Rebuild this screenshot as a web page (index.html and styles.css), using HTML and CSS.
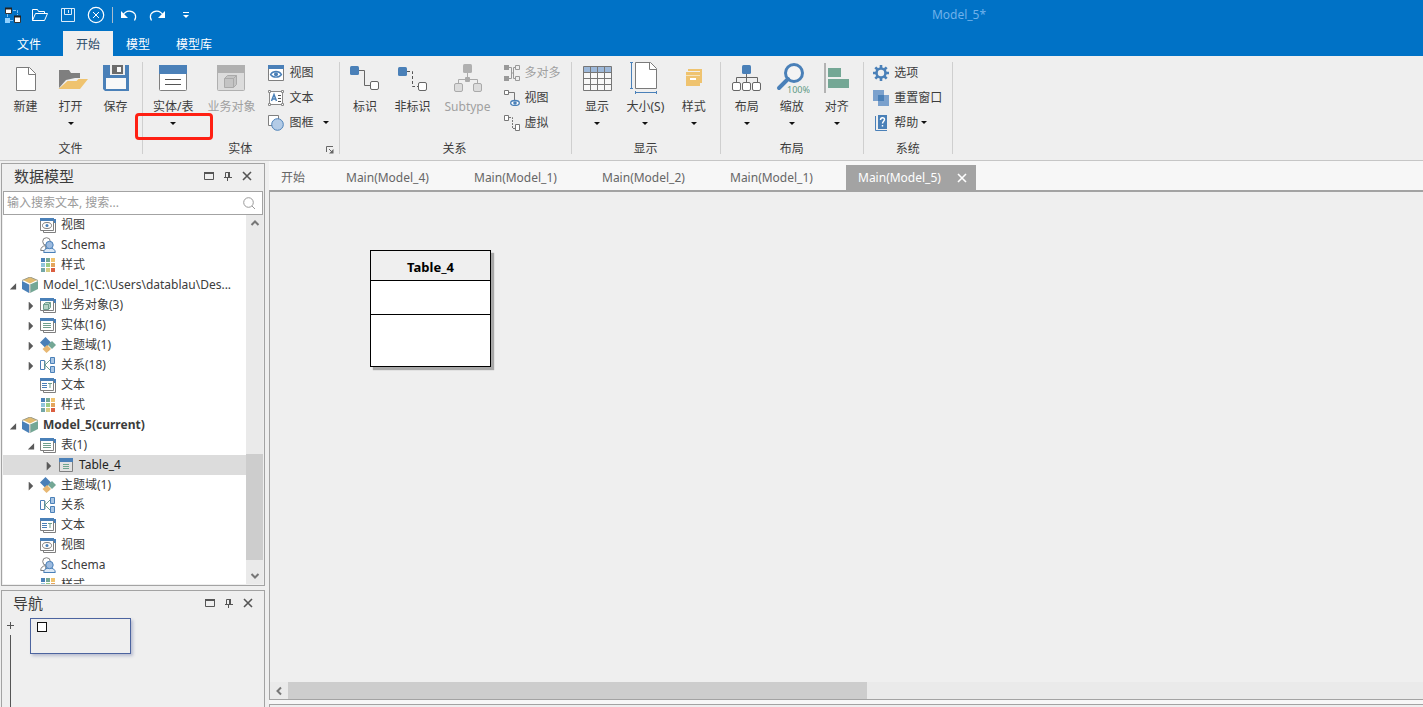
FILE: index.html
```html
<!DOCTYPE html>
<html lang="zh-CN">

<head>
    <meta charset="UTF-8">
    <meta name="viewport" content="width=device-width, initial-scale=1.0">
    <title>Model_5*</title>
    <link rel="stylesheet" href="styles.css">
</head>

<body>
    <!-- shared icons -->
    <svg class="defs" width="0" height="0">
        <symbol id="i-stack" viewBox="0 0 16 16">
            <path d="M13 4.500h2.500v11h-12v-2" fill="none" stroke="#7f7f7f" />
            <path d="M13 2h3v4h-2z" fill="#4a80b8" />
            <path d="M.5 1.500h13v12h-13z" fill="#fff" stroke="#7f7f7f" />
            <path d="M0 1h14v3H0z" fill="#4a80b8" />
        </symbol>
        <symbol id="i-views" viewBox="0 0 16 16">
            <use href="#i-stack" />
            <ellipse cx="7" cy="8.500" rx="4.500" ry="3" fill="none" stroke="#7f7f7f" />
            <circle cx="7" cy="8.500" r="1.500" fill="#4a80b8" />
        </symbol>
        <symbol id="i-objects" viewBox="0 0 16 16">
            <use href="#i-stack" />
            <path d="M3.500 7.500h5v5h-5zM3.500 7.500l2-2h5v5l-2 2M8.500 7.500l2-2" fill="#b5d3c6" stroke="#6f9f8e" />
        </symbol>
        <symbol id="i-entities" viewBox="0 0 16 16">
            <use href="#i-stack" />
            <path d="M3 6.500h8M3 8.500h8M3 10.500h8" stroke="#6f9f8e" />
        </symbol>
        <symbol id="i-texts" viewBox="0 0 16 16">
            <use href="#i-stack" />
            <path d="M2 6.500h5M2 8.500h5M2 10.500h5" stroke="#4a80b8" />
            <path d="M8 6.500h4M10 6v5" stroke="#6f9f8e" />
        </symbol>
        <symbol id="i-table" viewBox="0 0 16 16">
            <path d="M1.500 1.500h13v13h-13z" fill="#e2e2e2" stroke="#7f7f7f" />
            <path d="M1 1h14v4H1z" fill="#4a80b8" />
            <path d="M5 7.500h6M5 9.500h6M5 11.500h6" stroke="#6fa58e" />
        </symbol>
        <symbol id="i-schema" viewBox="0 0 16 16">
            <circle cx="6.500" cy="4.500" r="3.800" fill="#fff" stroke="#7f7f7f" />
            <path d="M.7 13.500c0-3 2-4.500 5-5v5z" fill="#fff" stroke="#7f7f7f" />
            <path d="M3.700 15.500c0-3 2.300-4.500 5.800-4.500s5.800 1.500 5.800 4.500z" fill="#dce8f5" stroke="#4a80b8" />
            <circle cx="9.500" cy="8" r="3.700" fill="#9dbbdf" stroke="#4a80b8" />
        </symbol>
        <symbol id="i-styles" viewBox="0 0 16 16">
            <path d="M1 1h4v4H1z" fill="#4a80b8" />
            <path d="M6 1h4v4H6z" fill="#74a795" />
            <path d="M11 1h4v4h-4z" fill="#f0c46f" />
            <path d="M1 6h4v4H1z" fill="#92c6dc" />
            <path d="M6 6h4v4H6z" fill="#98cc86" />
            <path d="M11 6h4v4h-4z" fill="#e3a45c" />
            <path d="M1 11h4v4H1z" fill="#74a7a7" />
            <path d="M6 11h4v4H6z" fill="#d6cd83" />
            <path d="M11 11h4v4h-4z" fill="#db5f40" />
        </symbol>
        <symbol id="i-model" viewBox="0 0 16 16">
            <path d="M8 0l7 3-7 3.500L1 3z" fill="#e2bc70" />
            <path d="M0 4l7 3.500V16l-7-4z" fill="#4a80b8" />
            <path d="M16 4L8 7.500V16l8-4z" fill="#74a795" />
            <path d="M7 7.500h1.500V16H7z" fill="#c9c9c9" />
            <path d="M0 3.500L8 0l8 3.500" fill="none" stroke="#9d9d8a" />
        </symbol>
        <symbol id="i-subject" viewBox="0 0 16 16">
            <path d="M5.500 0L11 5.500 5.500 11 0 5.500z" fill="#4a80b8" />
            <path d="M12 4l4 4-4 4-4-4z" fill="#74a795" />
            <path d="M7 8l4 4-4.500 4-4-4z" fill="#e8b873" />
        </symbol>
        <symbol id="i-relation" viewBox="0 0 16 16">
            <path d="M.5 3.500h4v9h-4z" fill="#fff" stroke="#4a80b8" />
            <path d="M10 3L5 8l5 5M5 4v8" fill="none" stroke="#6f9f8e" />
            <path d="M10.500.5h4v6h-4zM10.500 9.500h4v6h-4z" fill="#a9c6e4" stroke="#4a80b8" />
        </symbol>
        <symbol id="i-window" viewBox="0 0 12 12">
            <path d="M1.500 3h9v6.500h-9z" fill="none" stroke="#555" />
            <path d="M1 2h10v2H1z" fill="#555" />
        </symbol>
        <symbol id="i-pin" viewBox="0 0 12 12">
            <path d="M3.500 7V2.500h4V7M2 7.500h8M5.500 8v3" fill="none" stroke="#555" />
            <path d="M6 2h2v6H6z" fill="#555" />
        </symbol>
        <symbol id="i-close" viewBox="0 0 12 12">
            <path d="M2 2l8 8M10 2l-8 8" stroke="currentColor" stroke-width="1.600" />
        </symbol>
    </svg>

    <header class="titlebar">
        <div class="quick">
            <button aria-label="Model"><svg viewBox="0 0 18 18">
                <path d="M1.500 2.500h6v5h-6z" fill="#fff" stroke="#333" />
                <path d="M10.500 10.500h6v6h-6z" fill="#fff" stroke="#333" />
                <path d="M1 1.500h7v2H1zM10 9.500h7v2h-7z" fill="#222" />
                <path d="M1 12h5v5H1z" fill="#8fd0ff" />
                <path d="M3.500 8v4M9 4.500h4.500V9M6 14.500h4" fill="none" stroke="#7fc0f5" stroke-dasharray="3 1" />
            </svg></button>
            <button aria-label="打开"><svg viewBox="0 0 18 18">
                <path d="M1.500 14.500v-11h5l1 2h6v2M1.500 14.500l3-7h12l-3 7z" fill="none" stroke="#fff" />
            </svg></button>
            <button aria-label="保存"><svg viewBox="0 0 18 18">
                <path d="M2.500 2.500h13v13h-13zM5.500 2.500v6h7v-6M9.500 4v3" fill="none" stroke="#dcecfa" />
            </svg></button>
            <button aria-label="关闭"><svg viewBox="0 0 18 18">
                <path d="M6 6l6 6M12 6l-6 6" stroke="#fff" />
                <circle cx="9" cy="9" r="7.700" fill="none" stroke="#fff" stroke-width="1.200" />
            </svg></button>
            <span class="quick-sep"></span>
            <button aria-label="撤销"><svg viewBox="0 0 18 18">
                <path d="M3 9c3-5 9-5 12-1 1 2 1 4-.500 6.500" fill="none" stroke="#fff" stroke-width="1.200" />
                <path d="M1 5v7h7z" fill="#fff" />
            </svg></button>
            <button aria-label="重做"><svg viewBox="0 0 18 18">
                <path d="M15 9c-3-5-9-5-12-1-1 2-1 4 .5 6.500" fill="none" stroke="#fff" stroke-width="1.200" />
                <path d="M17 5v7h-7z" fill="#fff" />
            </svg></button>
            <button aria-label="更多"><svg viewBox="0 0 18 18">
                <path d="M7 6.500h6" stroke="#fff" />
                <path d="M7 9h6l-3 3z" fill="#fff" />
            </svg></button>
        </div>
        <div class="title">Model_5*</div>
    </header>

    <nav class="menu">
        <button>文件</button>
        <button class="active">开始</button>
        <button>模型</button>
        <button>模型库</button>
    </nav>

    <div class="ribbon">
        <section class="group">
            <div class="tools">
                <button class="tool"><svg viewBox="0 0 36 36">
                    <path d="M8.500 6.500h13l6 6v17h-19z" fill="#fff" stroke="#7a7a7a" />
                    <path d="M20.500 6.500v7h7" fill="none" stroke="#7a7a7a" />
                </svg><span>新建</span></button>
                <button class="tool drop"><svg viewBox="0 0 36 36">
                    <path d="M6 9h10l2 3h9v5h-5l-9 2-7 8z" fill="#7f7f7f" />
                    <path d="M5.500 28l9-8h9l2-2H35l-8 10z" fill="#efc36f" />
                </svg><span>打开</span></button>
                <button class="tool"><svg viewBox="0 0 36 36">
                    <path d="M5 4h26v26H7l-2-2z" fill="#4a80b8" />
                    <path d="M12 4h15v10H12z" fill="#efefef" />
                    <path d="M14 4h11v9H14z" fill="#6b6b6b" />
                    <path d="M19 6h4v5h-4zM8 17h20v11H8z" fill="#f8f8f8" />
                </svg><span>保存</span></button>
            </div>
            <div class="group-name">文件</div>
        </section>

        <section class="group">
            <div class="tools">
                <button class="tool drop"><svg viewBox="0 0 36 36">
                    <rect x="4.500" y="4.500" width="27" height="25" rx="1" fill="#fff" stroke="#7f7f7f" />
                    <path d="M4 4h28v9H4z" fill="#4a80b8" />
                    <path d="M10 18.500h16M10 23.500h16" stroke="#555" />
                </svg><span>实体/表</span></button>
                <button class="tool" disabled><svg viewBox="0 0 36 36">
                    <rect x="4.500" y="4.500" width="27" height="25" rx="1" fill="#dcdcdc" stroke="#b0b0b0" />
                    <path d="M4 4h28v8H4z" fill="#b0b0b0" />
                    <path d="M11.500 17.500h9v9h-9zM11.500 17.500l3-3h9v9l-3 3M20.500 17.500l3-3" fill="#c4c4c4" stroke="#aaa" />
                </svg><span>业务对象</span></button>
                <div class="small-tools">
                    <button class="small"><svg viewBox="0 0 16 16">
                        <path d="M.5.500h15v15H.5z" fill="#fff" stroke="#7f7f7f" />
                        <path d="M0 0h16v4H0z" fill="#4a80b8" />
                        <path d="M2.500 9.500C5 5.500 11 5.500 13.500 9.500 11 13 5 13 2.500 9.500z" fill="#fff" stroke="#4a80b8" stroke-width="1.300" />
                        <circle cx="8" cy="9.300" r="2" fill="#4a80b8" />
                    </svg>视图</button>
                    <button class="small"><svg viewBox="0 0 16 16">
                        <path d="M1.500 1.500h13v13h-13z" fill="#fff" stroke="#8a8a8a" />
                        <path d="M.5.500h2v2h-2zM13.500.500h2v2h-2zM.5 13.500h2v2h-2zM13.500 13.500h2v2h-2z" fill="#fff" stroke="#8a8a8a" />
                        <path d="M3.500 11L6 4.500 8.500 11M4.500 9h3" fill="none" stroke="#4a80b8" stroke-width="1.500" />
                        <path d="M10 5.500h3M10 8.500h3M10 11.500h3" stroke="#555" />
                    </svg>文本</button>
                    <button class="small small-drop"><svg viewBox="0 0 16 16">
                        <path d="M.5.500h10v10H.5z" fill="#fff" stroke="#7f7f7f" />
                        <circle cx="9.500" cy="9.500" r="5.800" fill="#b3cbe6" stroke="#4a80b8" />
                    </svg>图框</button>
                </div>
            </div>
            <div class="group-name">实体</div>
            <button class="launcher" aria-label="实体设置"><svg viewBox="0 0 8 8">
                <path d="M.5 6V.500H7M3 3l3 3" fill="none" stroke="#666" />
                <path d="M7.500 3v4.500H3z" fill="#666" />
            </svg></button>
            <div class="highlight"></div>
        </section>

        <section class="group">
            <div class="tools">
                <button class="tool"><svg viewBox="0 0 36 36">
                    <rect x="3" y="5" width="9" height="9" rx="1.500" fill="#4a80b8" />
                    <path d="M12 9.500h5.500v15H23" fill="none" stroke="#666" />
                    <rect x="23.500" y="20.500" width="8" height="8" rx="1.500" fill="#fff" stroke="#666" />
                </svg><span>标识</span></button>
                <button class="tool"><svg viewBox="0 0 36 36">
                    <rect x="3" y="6" width="9" height="9" rx="1.500" fill="#4a80b8" />
                    <path d="M12 10.500h5.500v15H23" fill="none" stroke="#555" stroke-dasharray="3 2" />
                    <rect x="23.500" y="21.500" width="8" height="8" rx="1.500" fill="#fff" stroke="#666" />
                </svg><span>非标识</span></button>
                <button class="tool" disabled><svg viewBox="0 0 36 36">
                    <rect x="13" y="3" width="9" height="9" rx="1.500" fill="#b0b0b0" />
                    <path d="M17.500 12v6.500M8.500 22v-3.500h19V22" fill="none" stroke="#aaa" />
                    <rect x="15" y="16" width="5" height="5" rx="1" fill="#aaa" />
                    <rect x="4.500" y="22.500" width="8" height="8" rx="1.500" fill="#dcdcdc" stroke="#aaa" />
                    <rect x="23.500" y="22.500" width="8" height="8" rx="1.500" fill="#dcdcdc" stroke="#aaa" />
                </svg><span>Subtype</span></button>
                <div class="small-tools">
                    <button class="small" disabled><svg viewBox="0 0 16 16">
                        <path d="M5 2.500h2.500v11H5M12 2.500H9.500v11H12M7 8h3" fill="none" stroke="#999" />
                        <path d="M0 0h5v5H0zM0 11h5v5H0z" fill="#999" />
                        <path d="M11.500.500h4v4h-4zM11.500 11.500h4v4h-4z" fill="#eee" stroke="#999" />
                    </svg>多对多</button>
                    <button class="small"><svg viewBox="0 0 16 16">
                        <path d="M.5.500h4v4h-4z" fill="#fff" stroke="#777" />
                        <path d="M5 2.500h5.500V10" fill="none" stroke="#777" />
                        <ellipse cx="11" cy="13" rx="4.300" ry="2.500" fill="#fff" stroke="#4a80b8" stroke-width="1.300" />
                        <circle cx="11" cy="13" r="1.800" fill="#4a80b8" />
                    </svg>视图</button>
                    <button class="small"><svg viewBox="0 0 16 16">
                        <path d="M.5.500h4v5h-4zM11.500 9.500h4v6h-4z" fill="#fff" stroke="#777" />
                        <path d="M5 2.500h3.500V13.500H11" fill="none" stroke="#777" stroke-dasharray="2 1" />
                    </svg>虚拟</button>
                </div>
            </div>
            <div class="group-name">关系</div>
        </section>

        <section class="group">
            <div class="tools">
                <button class="tool drop"><svg viewBox="0 0 36 36">
                    <path d="M4.500 5.500h28v24h-28z" fill="#f8f8f8" />
                    <path d="M4.500 5.500h28v6h-28z" fill="#9db8d9" />
                    <path d="M4.500 5.500h28v24h-28zM4.500 11.500h28M4.500 17.500h28M4.500 23.500h28M11.500 5.500v24M18.500 5.500v24M25.500 5.500v24" fill="none" stroke="#777" />
                </svg><span>显示</span></button>
                <button class="tool drop"><svg viewBox="0 0 36 36">
                    <path d="M8.500 1.500h15l6 6v20h-21z" fill="#fff" stroke="#7a7a7a" />
                    <path d="M22.500 1.500v7h7" fill="none" stroke="#7a7a7a" />
                    <path d="M4.500 1.500v26M3 1.500h3M3 27.500h3M8.500 31.500h21M8.500 30v3M29.500 30v3" stroke="#4a80b8" />
                </svg><span>大小(S)</span></button>
                <button class="tool drop"><svg viewBox="0 0 36 36">
                    <path d="M12 8h14v14h-2V10H12zM10 11h14v3H10zM10 15h14v10H10z" fill="#efc36f" />
                    <path d="M10 14.500h14" stroke="#f6e3bb" />
                    <path d="M14 17h6v2h-6z" fill="#fff" />
                </svg><span>样式</span></button>
            </div>
            <div class="group-name">显示</div>
        </section>

        <section class="group">
            <div class="tools">
                <button class="tool drop"><svg viewBox="0 0 36 36">
                    <rect x="13" y="4" width="9" height="9" rx="1.500" fill="#4a80b8" />
                    <path d="M17.500 13v8M7.500 21v-4.500h21V21" fill="none" stroke="#666" />
                    <rect x="3.500" y="21.500" width="8" height="8" rx="1.500" fill="#fff" stroke="#666" />
                    <rect x="13.500" y="21.500" width="8" height="8" rx="1.500" fill="#fff" stroke="#666" />
                    <rect x="23.500" y="21.500" width="8" height="8" rx="1.500" fill="#fff" stroke="#666" />
                </svg><span>布局</span></button>
                <button class="tool drop"><svg viewBox="0 0 36 36">
                    <circle cx="20" cy="12" r="8.500" fill="#f4f4f4" stroke="#4a80b8" stroke-width="3" />
                    <path d="M14 18l-9 9" stroke="#4a80b8" stroke-width="4" stroke-linecap="round" />
                    <text x="13" y="32" class="zoom-text">100%</text>
                </svg><span>缩放</span></button>
                <button class="tool drop"><svg viewBox="0 0 36 36">
                    <path d="M6 2v30" stroke="#777" />
                    <path d="M9 7h13v9H9zM9 18h21v9H9z" fill="#74a795" />
                </svg><span>对齐</span></button>
            </div>
            <div class="group-name">布局</div>
        </section>

        <section class="group">
            <div class="tools">
                <div class="small-tools">
                    <button class="small"><svg viewBox="0 0 16 16">
                        <circle cx="8" cy="8" r="4.500" fill="none" stroke="#4a80b8" stroke-width="2.600" />
                        <path d="M8 0v3M8 13v3M0 8h3M13 8h3M2.300 2.300l2.200 2.200M11.500 11.500l2.200 2.200M13.700 2.300l-2.200 2.200M4.500 11.500l-2.200 2.200" stroke="#4a80b8" stroke-width="2.600" />
                    </svg>选项</button>
                    <button class="small"><svg viewBox="0 0 16 16">
                        <path d="M0 0h11v11H0zM5 5h11v11H5z" fill="#7ba1cd" />
                        <path d="M5 5h6v6H5z" fill="#4a80b8" />
                    </svg>重置窗口</button>
                    <button class="small small-drop near"><svg viewBox="0 0 16 16">
                        <path d="M2.500 1v14.500H14" fill="none" stroke="#4a80b8" />
                        <path d="M5 0h9v14H5z" fill="#4a80b8" />
                        <path d="M7.500 5c0-3 4-3 4-.5 0 1.500-2 2-2 4M9.500 10v1.500" fill="none" stroke="#fff" stroke-width="1.400" />
                    </svg>帮助</button>
                </div>
            </div>
            <div class="group-name">系统</div>
        </section>
    </div>

    <div class="workspace">
        <aside class="sidebar">
            <section class="panel model-panel">
                <div class="panel-head">
                    <h2>数据模型</h2>
                    <button aria-label="窗口"><svg><use href="#i-window" /></svg></button>
                    <button aria-label="固定"><svg><use href="#i-pin" /></svg></button>
                    <button aria-label="关闭"><svg><use href="#i-close" /></svg></button>
                </div>
                <div class="search">
                    <input type="text" aria-label="搜索" placeholder="输入搜索文本, 搜索...">
                    <svg viewBox="0 0 12 12">
                        <circle cx="5.500" cy="5.500" r="4.800" fill="none" stroke="#999" />
                        <path d="M9 9l3 3" stroke="#999" />
                    </svg>
                </div>
                <div class="tree-wrap">
                    <ul class="tree">
                        <li class="row l1"><svg><use href="#i-views" /></svg>视图</li>
                        <li class="row l1"><svg><use href="#i-schema" /></svg>Schema</li>
                        <li class="row l1"><svg><use href="#i-styles" /></svg>样式</li>
                        <li class="row open"><svg><use href="#i-model" /></svg>Model_1(C:\Users\datablau\Des...</li>
                        <li class="row l1 closed"><svg><use href="#i-objects" /></svg>业务对象(3)</li>
                        <li class="row l1 closed"><svg><use href="#i-entities" /></svg>实体(16)</li>
                        <li class="row l1 closed"><svg><use href="#i-subject" /></svg>主题域(1)</li>
                        <li class="row l1 closed"><svg><use href="#i-relation" /></svg>关系(18)</li>
                        <li class="row l1"><svg><use href="#i-texts" /></svg>文本</li>
                        <li class="row l1"><svg><use href="#i-styles" /></svg>样式</li>
                        <li class="row open current"><svg><use href="#i-model" /></svg>Model_5(current)</li>
                        <li class="row l1 open"><svg><use href="#i-entities" /></svg>表(1)</li>
                        <li class="row l2 closed selected"><svg><use href="#i-table" /></svg>Table_4</li>
                        <li class="row l1 closed"><svg><use href="#i-subject" /></svg>主题域(1)</li>
                        <li class="row l1"><svg><use href="#i-relation" /></svg>关系</li>
                        <li class="row l1"><svg><use href="#i-texts" /></svg>文本</li>
                        <li class="row l1"><svg><use href="#i-views" /></svg>视图</li>
                        <li class="row l1"><svg><use href="#i-schema" /></svg>Schema</li>
                        <li class="row l1"><svg><use href="#i-styles" /></svg>样式</li>
                    </ul>
                    <div class="vscroll">
                        <svg viewBox="0 0 10 10"><path d="M1.500 7L5 3.500 8.500 7" fill="none" stroke="#777" stroke-width="2" /></svg>
                        <div class="vtrack"><div class="vthumb"></div></div>
                        <svg viewBox="0 0 10 10"><path d="M1.500 3L5 6.500 8.500 3" fill="none" stroke="#777" stroke-width="2" /></svg>
                    </div>
                </div>
            </section>

            <section class="panel nav-panel">
                <div class="panel-head">
                    <h2>导航</h2>
                    <button aria-label="窗口"><svg><use href="#i-window" /></svg></button>
                    <button aria-label="固定"><svg><use href="#i-pin" /></svg></button>
                    <button aria-label="关闭"><svg><use href="#i-close" /></svg></button>
                </div>
                <div class="nav-body">
                    <div class="zoombar">
                        <svg viewBox="0 0 7 7"><path d="M0 3.500h7M3.500 0v7" stroke="#555" /></svg>
                        <div class="zoomline"></div>
                    </div>
                    <div class="minimap"><div class="mini-table"></div></div>
                </div>
            </section>
        </aside>

        <main class="editor">
            <div class="tabs">
                <button class="tab home">开始</button>
                <button class="tab">Main(Model_4)</button>
                <button class="tab">Main(Model_1)</button>
                <button class="tab">Main(Model_2)</button>
                <button class="tab">Main(Model_1)</button>
                <button class="tab active">Main(Model_5)<svg><use href="#i-close" /></svg></button>
            </div>
            <div class="canvas">
                <div class="entity">
                    <div class="entity-name">Table_4</div>
                    <div class="entity-keys"></div>
                    <div class="entity-columns"></div>
                </div>
            </div>
            <div class="hscroll">
                <svg viewBox="0 0 10 10"><path d="M7 1.500L3.500 5 7 8.500" fill="none" stroke="#777" stroke-width="2" /></svg>
                <div class="htrack"><div class="hthumb"></div></div>
            </div>
            <div class="bottom-dock"></div>
        </main>
    </div>
</body>

</html>
```

FILE: styles.css
```css
* {
    margin: 0;
    padding: 0;
    box-sizing: border-box;
}

body {
    display: flex;
    flex-direction: column;
    height: 100vh;
    overflow: hidden;
    background: #efefef;
    color: #3c3c3c;
    font: 12px/20px "Noto Sans", "Noto Sans CJK SC", sans-serif;
}

button,
input {
    font: inherit;
    color: inherit;
    background: none;
    border: none;
}

svg {
    flex: none;
    display: block;
}

.defs {
    position: absolute;
}

/* title bar */
.titlebar {
    display: flex;
    align-items: center;
    height: 30px;
    background: #0072c6;
}

.quick {
    display: flex;
    align-items: center;
}

.quick button {
    width: 28px;
    display: flex;
    justify-content: center;
}

.quick button:first-child {
    width: 26px;
}

.quick svg {
    width: 18px;
    height: 18px;
}

.quick-sep {
    width: 1px;
    height: 16px;
    margin: 0 2px;
    background: #a9bccd;
}

.title {
    flex: 1;
    padding-left: 296px;
    text-align: center;
    color: #6fb1ea;
}

.menu {
    display: flex;
    height: 26px;
    padding: 1px 0 0 4px;
    background: #0072c6;
    color: #fff;
}

.menu button {
    padding: 2px 13px 0;
}

.menu button:first-child {
    margin-right: 9px;
}

.menu .active {
    background: #efefef;
    color: #2b4a68;
}

/* ribbon */
.ribbon {
    display: flex;
    height: 105px;
    padding: 6px 0;
    border-bottom: 1px solid #c6c6c6;
}

.group {
    position: relative;
    display: flex;
    flex-direction: column;
    padding: 0 4px 0 3px;
    border-right: 1px solid #cfcfcf;
}

.tools {
    display: flex;
    flex: 1;
}

.tool {
    display: flex;
    flex-direction: column;
    align-items: center;
    min-width: 45px;
    padding: 0 7px;
}

.tool svg {
    width: 36px;
    height: 36px;
    margin: -1px -6px 1px;
}

.tool span {
    line-height: 18px;
    white-space: nowrap;
}

.tool:disabled,
.small:disabled {
    color: #a0a0a0;
}

.drop::after,
.small-drop::after {
    content: "";
    border: 3px solid transparent;
    border-top-color: #111;
    border-bottom: none;
}

.drop::after {
    margin-top: 6px;
}

.zoom-text {
    font-size: 9px;
    fill: #5f9a85;
}

.small-tools {
    display: flex;
    flex-direction: column;
    padding: 0 6px;
}

.small {
    display: flex;
    align-items: center;
    gap: 5px;
    height: 25px;
    margin-top: -2px;
    margin-bottom: 2px;
    white-space: nowrap;
}

.small svg {
    width: 16px;
    height: 16px;
}

.small-drop::after {
    margin-left: 4px;
}

.small-drop.near::after {
    margin-left: -2px;
}

.group-name {
    margin-bottom: -3px;
    line-height: 16px;
    text-align: center;
}

.launcher {
    position: absolute;
    right: 5px;
    bottom: 0;
}

.launcher svg {
    width: 8px;
    height: 8px;
}

.highlight {
    position: absolute;
    left: -8px;
    top: 51px;
    width: 78px;
    height: 27px;
    border: 3px solid #ff2013;
    border-radius: 4px;
    pointer-events: none;
}

/* docked panels */
.workspace {
    display: flex;
    flex: 1;
    min-height: 0;
}

.sidebar {
    display: flex;
    flex-direction: column;
    gap: 4px;
    width: 269px;
    padding: 2px 4px 0 1px;
}

.panel {
    display: flex;
    flex-direction: column;
    border: 1px solid #a3a3a3;
}

.model-panel {
    flex: 1;
    min-height: 0;
    padding: 0 1px 1px;
}

.nav-panel {
    height: 117px;
    border-bottom: none;
}

.panel-head {
    display: flex;
    align-items: center;
    gap: 7px;
    height: 27px;
    padding: 0 10px 3px 11px;
}

.panel-head h2 {
    flex: 1;
    font-size: 15px;
    font-weight: normal;
}

.panel-head svg {
    width: 12px;
    height: 12px;
    color: #555;
}

.search {
    display: flex;
    align-items: center;
    height: 24px;
    padding: 0 7px 1px 3px;
    background: #fff;
    border: 1px solid #a3a3a3;
}

.search input {
    flex: 1;
    min-width: 0;
    outline: none;
}

.search input::placeholder {
    color: #9a9a9a;
}

.search svg {
    width: 12px;
    height: 12px;
}

.tree-wrap {
    display: flex;
    flex: 1;
    min-height: 0;
    background: #fff;
}

.tree {
    flex: 1;
    overflow: hidden;
    list-style: none;
}

.row {
    display: flex;
    align-items: center;
    gap: 5px;
    height: 20px;
    padding-left: 5px;
    white-space: nowrap;
}

.row svg {
    width: 16px;
    height: 16px;
}

/* expander column, empty for leaves */
.row::before {
    content: "";
    width: 9px;
    height: 9px;
    margin-top: 2px;
}

.row.open::before {
    background: #595959;
    clip-path: polygon(90% 20%, 90% 90%, 20% 90%);
}

.row.closed::before {
    background: #595959;
    clip-path: polygon(30% 0, 80% 50%, 30% 100%);
}

.l1 {
    padding-left: 23px;
}

.l2 {
    padding-left: 41px;
}

.current {
    font-weight: bold;
}

.selected {
    background: #dcdcdc;
    color: #222;
}

.vscroll {
    display: flex;
    flex-direction: column;
    align-items: center;
    width: 17px;
    padding: 3px 0;
    background: #eaeaea;
}

.vscroll svg,
.hscroll svg {
    width: 10px;
    height: 10px;
}

.vtrack {
    display: flex;
    flex-direction: column;
    justify-content: flex-end;
    flex: 1;
    width: 100%;
    padding-bottom: 11px;
}

.vthumb {
    height: 32%;
    background: #cdcdcd;
}

.nav-body {
    display: flex;
    flex: 1;
    gap: 16px;
    padding-left: 5px;
}

.zoombar {
    display: flex;
    flex-direction: column;
    align-items: center;
    gap: 6px;
    padding-top: 4px;
}

.zoombar svg {
    width: 7px;
    height: 7px;
}

.zoomline {
    flex: 1;
    width: 1px;
    background: #555;
}

.minimap {
    width: 101px;
    height: 36px;
    padding: 3px 6px;
    border: 1px solid #4c649f;
    box-shadow: 2px 2px 3px #b9bdd0;
}

.mini-table {
    width: 10px;
    height: 10px;
    background: #fff;
    border: 1px solid #111;
}

/* editor */
.editor {
    display: flex;
    flex-direction: column;
    flex: 1;
    min-width: 0;
    background: #f7f7f7;
}

.tabs {
    display: flex;
    height: 31px;
    padding-top: 4px;
    border-bottom: 2px solid #a3a3a3;
}

.tab {
    display: flex;
    align-items: center;
    justify-content: space-between;
    width: 128px;
    padding: 0 8px 0 12px;
    color: #666;
}

.tab.home {
    width: 65px;
}

.tab.active {
    width: 130px;
    background: #a3a3a3;
    color: #fff;
}

.tab svg {
    width: 12px;
    height: 12px;
}

.canvas {
    position: relative;
    flex: 1;
    background: #efefef;
    border-left: 1px solid #a3a3a3;
}

.entity {
    position: absolute;
    left: 100px;
    top: 58px;
    width: 121px;
    background: #fff;
    border: 1px solid #000;
    box-shadow: 3px 3px 1px #a8a8a8;
}

.entity-name {
    height: 30px;
    line-height: 32px;
    background: #efefef;
    border-bottom: 1px solid #000;
    color: #000;
    font-size: 13px;
    font-weight: bold;
    text-align: center;
}

.entity-keys {
    height: 34px;
    border-bottom: 1px solid #000;
}

.entity-columns {
    height: 51px;
}

.hscroll {
    display: flex;
    align-items: center;
    gap: 4px;
    height: 18px;
    padding-left: 4px;
    background: #eaeaea;
    border-left: 1px solid #a3a3a3;
    border-bottom: 1px solid #a3a3a3;
}

.htrack {
    flex: 1;
    height: 100%;
}

.hthumb {
    width: 51%;
    height: 100%;
    background: #cdcdcd;
}

.bottom-dock {
    height: 3px;
    margin-top: 4px;
    background: #efefef;
    border-top: 1px solid #a3a3a3;
    border-left: 1px solid #a3a3a3;
}
```
